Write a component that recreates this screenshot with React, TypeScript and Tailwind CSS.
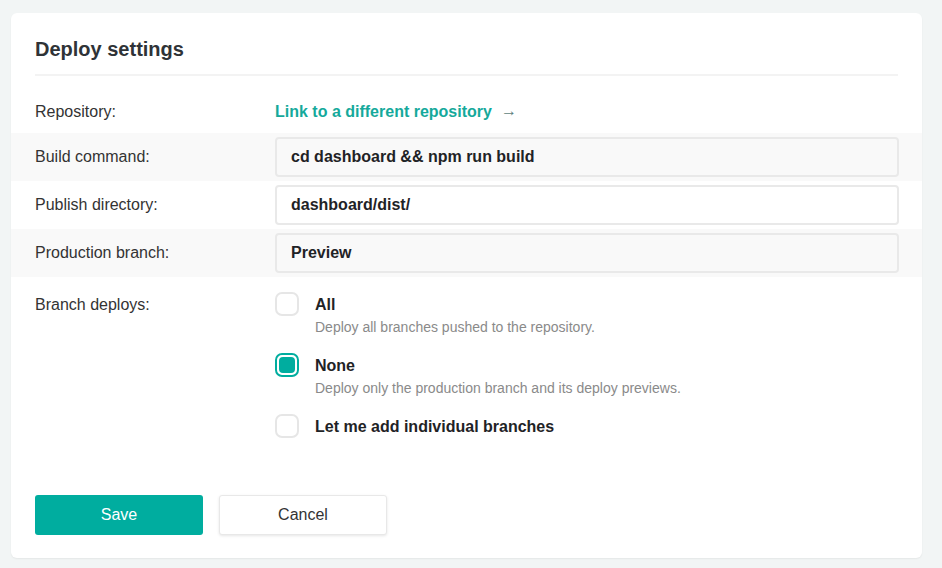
import React from "react";

type Option = {
  id: string;
  title: string;
  description?: string;
};

const options: Option[] = [
  { id: "all", title: "All", description: "Deploy all branches pushed to the repository." },
  { id: "none", title: "None", description: "Deploy only the production branch and its deploy previews." },
  { id: "individual", title: "Let me add individual branches" },
];

const fields = [
  { label: "Build command:", value: "cd dashboard && npm run build", shaded: true },
  { label: "Publish directory:", value: "dashboard/dist/", shaded: false },
  { label: "Production branch:", value: "Preview", shaded: true },
];

const Radio = ({ checked }: { checked: boolean }) =>
  checked ? (
    <div className="w-6 h-6 shrink-0 rounded-[7px] border-2 border-[#00ad9f] bg-white p-[2px]">
      <div className="w-full h-full rounded-[4px] bg-[#00ad9f]" />
    </div>
  ) : (
    <div className="w-6 h-6 shrink-0 rounded-[7px] border-2 border-[#e6e6e6] bg-white" />
  );

export default function App() {
  const selected = "none";

  return (
    <div
      className="min-h-[568px] bg-[#f2f5f5] pt-[13px] pb-[10px] pl-[11px] pr-[20px]"
      style={{ fontFamily: '"Liberation Sans", Arial, sans-serif' }}
    >
      <div className="w-[911px] bg-white rounded-md shadow-[0_1px_2px_rgba(0,0,0,0.06)] pb-[23px]">
        <div className="px-6">
          <h2 className="pt-[25px] pb-[13px] text-[20px] leading-[23px] font-bold text-[#2f3337]">
            Deploy settings
          </h2>
          <div className="h-[2px] bg-[#f3f3f3]" />
        </div>

        <div className="mt-[13px] h-[44px] flex items-center pt-[2px] px-6">
          <div className="w-[240px] text-base text-[#333]">Repository:</div>
          <a className="flex items-center gap-[9px] text-base font-bold text-[#15a99b]">
            Link to a different repository
            <span className="font-normal text-[#5f7f7c] -translate-y-px">→</span>
          </a>
        </div>

        {fields.map((f) => (
          <div
            key={f.label}
            className={`h-12 flex items-center pl-6 pr-[23px] ${f.shaded ? "bg-[#f9f9f9]" : "bg-white"}`}
          >
            <div className="w-[240px] text-base text-[#333]">{f.label}</div>
            <div
              className={`flex-1 h-10 flex items-center pl-[14px] rounded border-2 border-[#e9e9e9] text-base font-bold text-[#1f2326] ${
                f.shaded ? "bg-[#f9f9f9]" : "bg-white"
              }`}
            >
              {f.value}
            </div>
          </div>
        ))}

        <div className="flex px-6 pt-[15px]">
          <div className="w-[240px] text-base leading-6 text-[#333] pt-px">Branch deploys:</div>
          <div className="flex flex-col gap-4">
            {options.map((o) => (
              <div key={o.id} className="flex gap-4">
                <Radio checked={o.id === selected} />
                <div className="flex flex-col">
                  <div className="text-base leading-[25px] font-bold text-[#1f2326]">{o.title}</div>
                  {o.description && (
                    <div className="text-sm leading-5 text-[#8a8a8a]">{o.description}</div>
                  )}
                </div>
              </div>
            ))}
          </div>
        </div>

        <div className="flex gap-4 px-6 mt-[56px]">
          <button className="w-[168px] h-10 rounded-[3px] bg-[#00ad9f] text-white text-base">
            Save
          </button>
          <button className="w-[168px] h-10 rounded-[3px] bg-white border border-[#e8e8e8] shadow-[0_1px_3px_rgba(0,0,0,0.1)] text-[#333] text-base">
            Cancel
          </button>
        </div>
      </div>
    </div>
  );
}
